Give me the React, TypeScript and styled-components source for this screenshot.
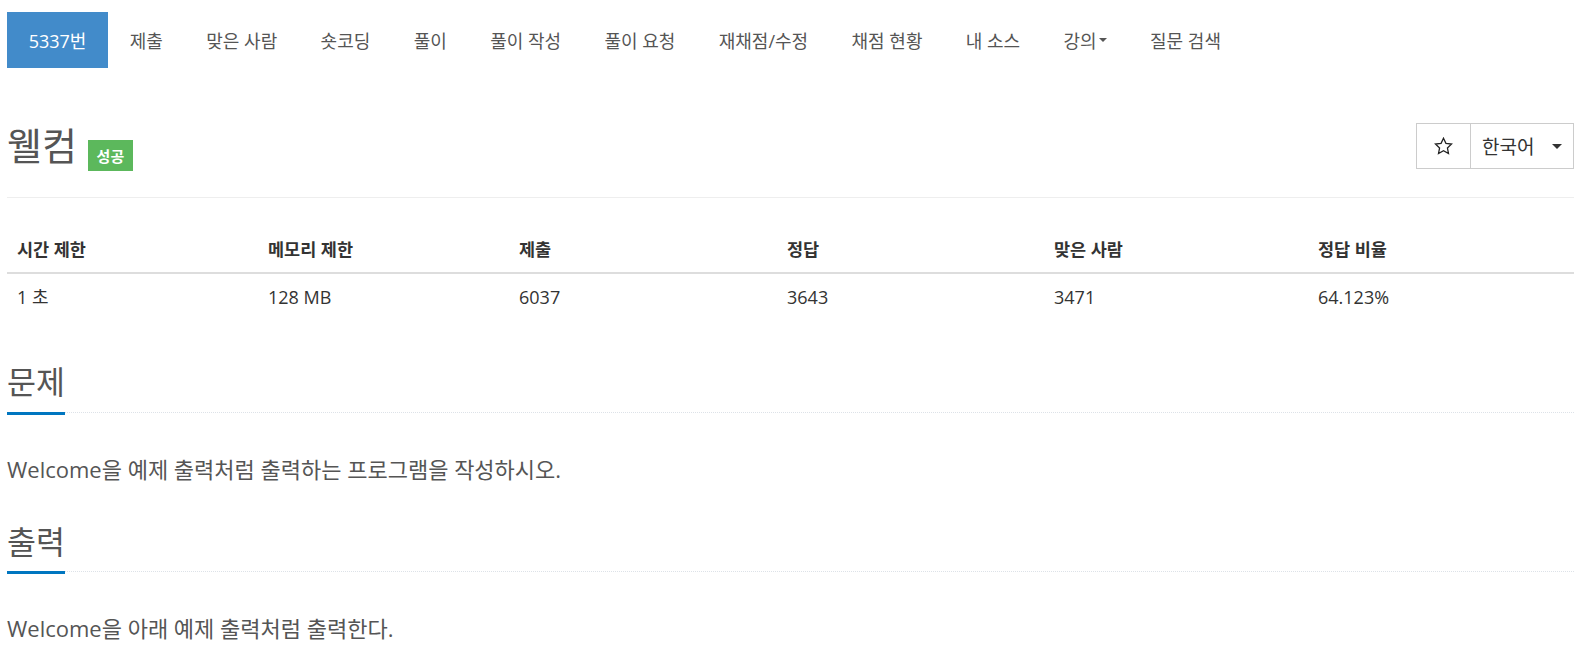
import React from "react";
import styled, { createGlobalStyle } from "styled-components";

const GlobalStyle = createGlobalStyle`
  html, body {
    margin: 0;
    padding: 0;
    background: #fff;
  }
  body {
    font-family: "Open Sans", "Noto Sans CJK KR", sans-serif;
    color: #333;
  }
  * {
    box-sizing: border-box;
  }
`;

const Page = styled.div`
  padding: 0 16px 0 7px;
`;

const Menu = styled.ul`
  display: flex;
  margin: 12px 0 0;
  padding: 0;
  list-style: none;
  height: 56px;
`;

const MenuItem = styled.li<{ $active?: boolean }>`
  display: flex;
  align-items: center;
  padding: 0 21.7px;
  height: 56px;
  font-size: 18px;
  color: ${({ $active }) => ($active ? "#fff" : "#555")};
  background: ${({ $active }) => ($active ? "#428bca" : "transparent")};
  white-space: nowrap;
  cursor: pointer;
`;

const Caret = styled.span<{ $size?: number; $color?: string }>`
  display: inline-block;
  margin-left: 2px;
  border-top: ${({ $size = 4.5 }) => $size}px solid ${({ $color = "#555" }) => $color};
  border-left: ${({ $size = 4.5 }) => $size}px solid transparent;
  border-right: ${({ $size = 4.5 }) => $size}px solid transparent;
`;

const PageHeader = styled.div`
  display: flex;
  align-items: center;
  justify-content: space-between;
  margin-top: 55px;
  padding-bottom: 28px;
  border-bottom: 1px solid #eee;
`;

const TitleGroup = styled.div`
  display: flex;
  align-items: center;
`;

const Title = styled.h1`
  margin: 0;
  font-size: 38px;
  line-height: 1.1;
  font-weight: 400;
  color: #555;
`;

const Badge = styled.span`
  display: inline-flex;
  align-items: center;
  justify-content: center;
  margin: 10px 0 -10px 11px;
  width: 45px;
  height: 31px;
  background: #5cb85c;
  color: #fff;
  font-size: 15px;
  font-weight: 700;
`;

const ButtonGroup = styled.div`
  display: flex;
`;

const GroupButton = styled.button<{ $width: number }>`
  display: flex;
  align-items: center;
  justify-content: center;
  width: ${({ $width }) => $width}px;
  height: 46px;
  padding: 0 11px;
  border: 1px solid #ccc;
  background: #fff;
  font-family: inherit;
  font-size: 19px;
  color: #333;
  & + & {
    margin-left: -1px;
    justify-content: space-between;
  }
`;

const StatsTable = styled.table`
  width: 100%;
  margin: 28px 0 45px;
  border-collapse: collapse;
  table-layout: fixed;
`;

const HeadCell = styled.th<{ $width?: number }>`
  width: ${({ $width }) => ($width ? `${$width}px` : "auto")};
  padding: 11px 10px;
  text-align: left;
  font-size: 17.5px;
  line-height: 24px;
  font-weight: 700;
  color: #333;
  border-bottom: 2px solid #ddd;
`;

const Cell = styled.td`
  padding: 11px 10px;
  font-size: 18px;
  line-height: 24px;
  color: #333;
`;

const Headline = styled.div`
  display: flex;
  margin-top: 38px;
  border-bottom: 1px dotted #dde2e8;
`;

const HeadlineTitle = styled.h2`
  margin: 0 0 -3px;
  padding-bottom: 12px;
  font-size: 31.5px;
  line-height: 1.1;
  font-weight: 400;
  color: #555;
  border-bottom: 3px solid #0076c0;
`;

const Paragraph = styled.p`
  margin: 39px 0 10px;
  font-size: 22px;
  line-height: 1.6;
  color: #555;
`;

const StarIcon = () => (
  <svg width="19" height="18" viewBox="0 0 24 23" fill="none">
    <path
      d="M12 1.5l3.1 6.6 7.2.9-5.3 5 1.4 7.1L12 17.6l-6.4 3.5 1.4-7.1-5.3-5 7.2-.9z"
      stroke="#222"
      strokeWidth="1.6"
      strokeLinejoin="miter"
    />
  </svg>
);

const menu = [
  "제출",
  "맞은 사람",
  "숏코딩",
  "풀이",
  "풀이 작성",
  "풀이 요청",
  "재채점/수정",
  "채점 현황",
  "내 소스",
];

const heads: [string, number?][] = [
  ["시간 제한", 251],
  ["메모리 제한", 251],
  ["제출", 268],
  ["정답", 267],
  ["맞은 사람", 264],
  ["정답 비율"],
];

const values = ["1 초", "128 MB", "6037", "3643", "3471", "64.123%"];

export default function App() {
  return (
    <Page>
      <GlobalStyle />
      <Menu>
        <MenuItem $active>5337번</MenuItem>
        {menu.map((m) => (
          <MenuItem key={m}>{m}</MenuItem>
        ))}
        <MenuItem>
          강의
          <Caret />
        </MenuItem>
        <MenuItem>질문 검색</MenuItem>
      </Menu>

      <PageHeader>
        <TitleGroup>
          <Title>웰컴</Title>
          <Badge>성공</Badge>
        </TitleGroup>
        <ButtonGroup>
          <GroupButton $width={55}>
            <StarIcon />
          </GroupButton>
          <GroupButton $width={104}>
            한국어
            <Caret $size={5} $color="#333" />
          </GroupButton>
        </ButtonGroup>
      </PageHeader>

      <StatsTable>
        <thead>
          <tr>
            {heads.map(([h, w]) => (
              <HeadCell key={h} $width={w}>
                {h}
              </HeadCell>
            ))}
          </tr>
        </thead>
        <tbody>
          <tr>
            {values.map((v) => (
              <Cell key={v}>{v}</Cell>
            ))}
          </tr>
        </tbody>
      </StatsTable>

      <section>
        <Headline>
          <HeadlineTitle>문제</HeadlineTitle>
        </Headline>
        <Paragraph>Welcome을 예제 출력처럼 출력하는 프로그램을 작성하시오.</Paragraph>
      </section>

      <section>
        <Headline>
          <HeadlineTitle>출력</HeadlineTitle>
        </Headline>
        <Paragraph>Welcome을 아래 예제 출력처럼 출력한다.</Paragraph>
      </section>
    </Page>
  );
}
